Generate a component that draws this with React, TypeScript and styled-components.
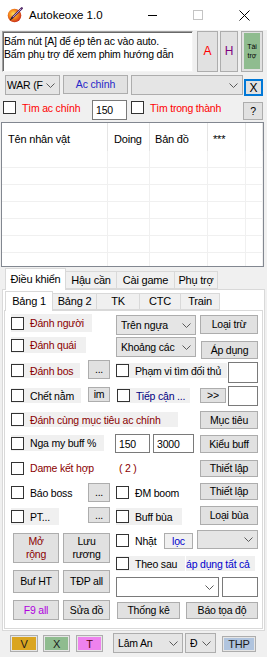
import React from "react";
import styled, { createGlobalStyle, css } from "styled-components";

const GlobalStyle = createGlobalStyle`
  html, body { margin: 0; padding: 0; background: #f0f0f0; }
  body { font-family: "Liberation Sans", Arial, sans-serif; font-size: 10.5px; letter-spacing: -0.2px; color: #000; }
  * { box-sizing: border-box; }
`;

type BoxP = { $ml?: number; $mt?: number; $w: number; $h: number };

const boxCss = css<BoxP>`
  flex-shrink: 0;
  margin-left: ${(p) => p.$ml ?? 0}px;
  margin-top: ${(p) => p.$mt ?? 0}px;
  width: ${(p) => p.$w}px;
  height: ${(p) => p.$h}px;
`;

const Window = styled.div`
  width: 267px;
  height: 657px;
  background: #f0f0f0;
  display: flex;
  flex-direction: column;
  overflow: hidden;
`;

const TitleBar = styled.div`
  height: 30px;
  background: #fff;
  display: flex;
  align-items: center;
  flex-shrink: 0;
`;

const AppIcon = styled.svg`
  margin-left: 7px;
  width: 16px;
  height: 16px;
  flex-shrink: 0;
`;

const Title = styled.span`
  margin-left: 6px;
  font-size: 11.5px;
  letter-spacing: 0;
  flex: 1;
  white-space: nowrap;
`;

const WinCtl = styled.div`
  width: 46px;
  height: 30px;
  display: flex;
  align-items: center;
  justify-content: center;
  flex-shrink: 0;
`;

const MinLine = styled.div`
  width: 9px;
  height: 1px;
  background: #000;
`;

const MaxBox = styled.div`
  width: 10px;
  height: 10px;
  border: 1px solid #c4c4c4;
`;

const Row = styled.div<{ $h: number; $mt?: number }>`
  display: flex;
  align-items: flex-start;
  height: ${(p) => p.$h}px;
  margin-top: ${(p) => p.$mt ?? 0}px;
  flex-shrink: 0;
`;

const Memo = styled.div<BoxP>`
  ${boxCss};
  background: #fff;
  border: 1px solid;
  border-color: #a0a0a0 #f4f4f4 #f4f4f4 #a0a0a0;
  box-shadow: inset 1px 1px 0 #696969;
  padding: 3px 0 0 1px;
  line-height: 13px;
  white-space: pre;
  overflow: hidden;
`;

const Btn = styled.div<BoxP & { $color?: string; $fs?: number; $light?: boolean }>`
  ${boxCss};
  background: ${(p) => (p.$light ? "#f0f0f0" : "#e1e1e1")};
  border: 1px solid #adadad;
  display: flex;
  align-items: center;
  justify-content: center;
  text-align: center;
  color: ${(p) => p.$color ?? "#000"};
  font-size: ${(p) => p.$fs ?? 10.5}px;
  line-height: 13px;
  white-space: pre;
  overflow: hidden;
`;

const ColorBtn = styled.div<BoxP & { $bg: string; $color?: string }>`
  ${boxCss};
  border: 1px solid #adadad;
  background: ${(p) => p.$bg};
  box-shadow: inset 0 0 0 1px #e6e6e6;
  display: flex;
  align-items: center;
  justify-content: center;
  color: ${(p) => p.$color ?? "#1a1a1a"};
  font-size: 11px;
`;

const FocusBtn = styled.div<BoxP>`
  ${boxCss};
  background: #e1e1e1;
  border: 2px solid #0078d7;
  display: flex;
  align-items: center;
  justify-content: center;
  font-size: 12px;
`;

const TaiTro = styled.div<BoxP>`
  ${boxCss};
  border: 1px solid #adadad;
  background: #e1e1e1;
  padding: 1px 2px 2px 2px;
  display: flex;
`;

const TaiTroFill = styled.div`
  flex: 1;
  background: #8fbc8f;
  display: flex;
  align-items: center;
  justify-content: center;
  text-align: center;
  font-size: 7px;
  letter-spacing: 0;
  line-height: 9px;
  white-space: pre;
`;

const ComboBox = styled.div<BoxP & { $white?: boolean; $pl?: number }>`
  ${boxCss};
  background: ${(p) => (p.$white ? "#fff" : "#e5e5e5")};
  border: 1px solid ${(p) => (p.$white ? "#7a7a7a" : "#adadad")};
  display: flex;
  align-items: center;
  padding-left: ${(p) => p.$pl ?? 4}px;
  overflow: hidden;
`;

const ComboText = styled.span`
  flex: 1;
  white-space: nowrap;
  overflow: hidden;
`;

const ChevronSvg = styled.svg`
  width: 9px;
  height: 5px;
  margin: 0 4px 0 1px;
  flex-shrink: 0;
`;

const Combo: React.FC<BoxP & { text?: string; white?: boolean; pl?: number }> = ({ text, white, pl, ...rest }) => (
  <ComboBox {...rest} $white={white} $pl={pl}>
    <ComboText>{text}</ComboText>
    <ChevronSvg viewBox="0 0 9 5">
      <path d="M0.5 0.5 L4.5 4.5 L8.5 0.5" fill="none" stroke="#5a5a5a" strokeWidth="1" />
    </ChevronSvg>
  </ComboBox>
);

const TextBox = styled.div<BoxP>`
  ${boxCss};
  background: #fff;
  border: 1px solid #7a7a7a;
  display: flex;
  align-items: center;
  padding-left: 3px;
  white-space: nowrap;
`;

const CheckWrap = styled.div<BoxP & { $bg?: boolean; $color?: string }>`
  ${boxCss};
  display: flex;
  align-items: center;
  background: ${(p) => (p.$bg ? "#f0f0f0" : "transparent")};
  color: ${(p) => p.$color ?? "#000"};
  white-space: nowrap;
  overflow: hidden;
`;

const CheckBox = styled.span`
  width: 13px;
  height: 13px;
  border: 1px solid #333;
  background: #fff;
  flex-shrink: 0;
`;

const CheckLabel = styled.span`
  margin-left: 6px;
`;

const Check: React.FC<BoxP & { label: string; bg?: boolean; color?: string }> = ({ label, bg, color, ...rest }) => (
  <CheckWrap {...rest} $bg={bg} $color={color}>
    <CheckBox />
    <CheckLabel>{label}</CheckLabel>
  </CheckWrap>
);

const Label = styled.div<BoxP & { $bg?: boolean; $color?: string }>`
  ${boxCss};
  display: flex;
  align-items: center;
  background: ${(p) => (p.$bg ? "#f0f0f0" : "transparent")};
  color: ${(p) => p.$color ?? "#000"};
  white-space: nowrap;
  overflow: hidden;
`;

/* List view */
const ListView = styled.div`
  margin: 2px 0 0 1px;
  width: 263px;
  height: 145px;
  border: 1px solid #828790;
  background: #fff;
  overflow: hidden;
  flex-shrink: 0;
`;

const LVHeader = styled.div`
  display: flex;
  height: 28px;
`;

const LVHeadCell = styled.div<{ $w?: number; $pl: number }>`
  ${(p) => (p.$w ? `width: ${p.$w}px; flex-shrink: 0;` : "flex: 1;")}
  padding: 3px 0 0 ${(p) => p.$pl}px;
  display: flex;
  align-items: center;
  border-right: 1px solid #e5e5e5;
  white-space: nowrap;
  font-size: 11px;
`;

const LVRow = styled.div`
  display: flex;
  height: 17px;
  border-bottom: 1px solid #f0f0f0;
`;

const LVCell = styled.div<{ $w?: number }>`
  ${(p) => (p.$w ? `width: ${p.$w}px; flex-shrink: 0;` : "flex: 1;")}
  border-right: 1px solid #f0f0f0;
`;

/* Tabs */
const TabControl = styled.div<{ $ml: number; $w: number; $mt: number }>`
  margin-left: ${(p) => p.$ml}px;
  margin-top: ${(p) => p.$mt}px;
  width: ${(p) => p.$w}px;
  display: flex;
  flex-direction: column;
  flex-shrink: 0;
`;

const TabStrip = styled.div<{ $h: number; $pl: number }>`
  display: flex;
  align-items: flex-end;
  height: ${(p) => p.$h}px;
  padding-left: ${(p) => p.$pl}px;
  position: relative;
  z-index: 1;
`;

const Tab = styled.div<{ $w: number; $h: number; $active?: boolean; $first?: boolean }>`
  width: ${(p) => p.$w}px;
  height: ${(p) => p.$h}px;
  margin-left: ${(p) => (p.$first ? 0 : -1)}px;
  margin-bottom: ${(p) => (p.$active ? -1 : 0)}px;
  border: 1px solid #d9d9d9;
  border-bottom: ${(p) => (p.$active ? "none" : "1px solid #d9d9d9")};
  background: ${(p) => (p.$active ? "#fff" : "#f0f0f0")};
  display: flex;
  align-items: center;
  justify-content: center;
  padding-bottom: ${(p) => (p.$active ? 2 : 1)}px;
  white-space: nowrap;
  flex-shrink: 0;
  font-size: 11px;
`;

const TabPage = styled.div<{ $h: number }>`
  height: ${(p) => p.$h}px;
  border: 1px solid #d9d9d9;
  background: #fff;
  padding: 1px;
  display: flex;
  flex-direction: column;
`;

const InnerPage = styled.div`
  height: 319px;
  border: 1px solid #d9d9d9;
  background: #fff;
  display: flex;
  flex-direction: column;
  flex-shrink: 0;
`;

const Block = styled.div<{ $h: number; $mt: number }>`
  display: flex;
  height: ${(p) => p.$h}px;
  margin-top: ${(p) => p.$mt}px;
  flex-shrink: 0;
`;

const Col = styled.div<{ $ml: number; $w: number }>`
  margin-left: ${(p) => p.$ml}px;
  width: ${(p) => p.$w}px;
  display: flex;
  flex-direction: column;
  flex-shrink: 0;
`;

const MAROON = "#8b0000";
const NAVY = "#000080";
const BLUE = "#0000cd";

export default function App() {
  const lvCols = [106, 42, 58, 38];
  return (
    <>
      <GlobalStyle />
      <Window>
        <TitleBar>
          <AppIcon viewBox="0 0 16 16">
            <defs>
              <radialGradient id="ig" cx="0.42" cy="0.4" r="0.65">
                <stop offset="0" stopColor="#ffe766" />
                <stop offset="0.45" stopColor="#f7901e" />
                <stop offset="1" stopColor="#c4231a" />
              </radialGradient>
            </defs>
            <circle cx="7.5" cy="8.5" r="6.8" fill="url(#ig)" />
            <path d="M14.8 1.2 L5.2 10.8" stroke="#4a2060" strokeWidth="2.2" strokeLinecap="round" />
            <path d="M14.2 1.8 L5.8 10.2" stroke="#d8c0ea" strokeWidth="0.8" />
            <path d="M5.2 10.8 L3.6 12.6" stroke="#222" strokeWidth="1.2" strokeLinecap="round" />
          </AppIcon>
          <Title>Autokeoxe 1.0</Title>
          <WinCtl>
            <MinLine />
          </WinCtl>
          <WinCtl>
            <MaxBox />
          </WinCtl>
          <WinCtl>
            <svg width="11" height="11" viewBox="0 0 11 11">
              <path d="M0.5 0.5 L10.5 10.5 M10.5 0.5 L0.5 10.5" stroke="#000" strokeWidth="1" />
            </svg>
          </WinCtl>
        </TitleBar>

        <Row $h={41} $mt={1}>
          <Memo $ml={2} $w={191} $h={41}>
            {"Bấm nút [A] để ép tên ac vào auto.\nBấm phụ trợ để xem phim hướng dẫn"}
          </Memo>
          <Btn $ml={4} $w={21} $h={41} $color="#f00" $fs={12}>A</Btn>
          <Btn $ml={2} $w={18} $h={41} $color="#800080" $fs={12}>H</Btn>
          <TaiTro $ml={3} $w={22} $h={41}>
            <TaiTroFill>{"Tài\ntrợ"}</TaiTroFill>
          </TaiTro>
        </Row>

        <Row $h={21} $mt={3}>
          <Combo $ml={5} $w={55} $h={20} pl={1} text="WAR (F" />
          <Btn $ml={3} $w={65} $h={19} $color="#2626c8">Ac chính</Btn>
          <Combo $ml={3} $w={112} $h={20} />
          <FocusBtn $ml={1} $w={19} $mt={4} $h={17}>X</FocusBtn>
        </Row>

        <Row $h={20} $mt={4}>
          <Check $ml={3} $w={89} $h={15} label="Tìm ac chính" color="#f00" />
          <TextBox $w={35} $h={20}>150</TextBox>
          <Check $ml={4} $w={100} $h={15} label="Tìm trong thành" color="#f00" />
          <Btn $ml={12} $w={20} $mt={2} $h={18}>?</Btn>
        </Row>

        <ListView>
          <LVHeader>
            <LVHeadCell $w={106} $pl={6}>Tên nhân vật</LVHeadCell>
            <LVHeadCell $w={42} $pl={6}>Doing</LVHeadCell>
            <LVHeadCell $w={58} $pl={5}>Bản đồ</LVHeadCell>
            <LVHeadCell $w={38} $pl={5}>***</LVHeadCell>
            <LVHeadCell $pl={0} />
          </LVHeader>
          {Array.from({ length: 7 }).map((_, i) => (
            <LVRow key={i}>
              {lvCols.map((w, j) => (
                <LVCell key={j} $w={w} />
              ))}
              <LVCell />
            </LVRow>
          ))}
        </ListView>

        <TabControl $ml={2} $w={263} $mt={1}>
          <TabStrip $h={21} $pl={3}>
            <Tab $first $active $w={61} $h={22}>Điều khiển</Tab>
            <Tab $w={52} $h={18}>Hậu cần</Tab>
            <Tab $w={59} $h={18}>Cài game</Tab>
            <Tab $w={44} $h={18}>Phụ trợ</Tab>
          </TabStrip>
          <TabPage $h={342}>
            <TabStrip $h={19} $pl={1}>
              <Tab $first $active $w={48} $h={20}>Bảng 1</Tab>
              <Tab $w={45} $h={17}>Bảng 2</Tab>
              <Tab $w={44} $h={17}>TK</Tab>
              <Tab $w={42} $h={17}>CTC</Tab>
              <Tab $w={40} $h={17}>Train</Tab>
            </TabStrip>
            <InnerPage>
              <Row $h={22} $mt={2}>
                <Check $ml={6} $w={81} $mt={1} $h={18} bg color={MAROON} label="Đánh người" />
                <Combo $ml={24} $w={80} $mt={2} $h={20} text="Trên ngựa" />
                <Btn $ml={4} $w={58} $mt={2} $h={19}>Loại trừ</Btn>
              </Row>
              <Row $h={22} $mt={2}>
                <Check $ml={6} $w={75} $h={16} bg color={MAROON} label="Đánh quái" />
                <Combo $ml={30} $w={80} $h={20} text="Khoảng các" />
                <Btn $ml={5} $w={57} $mt={4} $h={18}>Áp dụng</Btn>
              </Row>
              <Row $h={23} $mt={1}>
                <Check $ml={6} $w={69} $mt={3} $h={15} bg color={MAROON} label="Đánh bos" />
                <Btn $ml={8} $w={22} $h={19}>...</Btn>
                <Check $ml={6} $w={111} $mt={3} $h={15} bg label="Phạm vi tìm đối thủ" />
                <TextBox $ml={1} $w={30} $mt={2} $h={21} />
              </Row>
              <Row $h={20} $mt={3}>
                <Check $ml={6} $w={70} $mt={2} $h={15} bg label="Chết nằm" />
                <Btn $ml={7} $w={22} $mt={1} $h={15}>im</Btn>
                <Check $ml={7} $w={73} $mt={2} $h={15} bg color={NAVY} label="Tiếp cận ..." />
                <Btn $ml={10} $w={26} $mt={2} $h={15}>{">>"}</Btn>
                <TextBox $ml={2} $w={30} $h={20} />
              </Row>
              <Row $h={19} $mt={5}>
                <Check $ml={6} $w={167} $mt={1} $h={15} bg color={MAROON} label="Đánh cùng mục tiêu ac chính" />
                <Btn $ml={22} $w={58} $h={18}>Mục tiêu</Btn>
              </Row>
              <Row $h={21} $mt={4}>
                <Check $ml={6} $w={93} $mt={1} $h={16} bg label="Nga my buff %" />
                <TextBox $ml={11} $w={35} $h={19}>150</TextBox>
                <TextBox $ml={3} $w={41} $h={19}>3000</TextBox>
                <Btn $ml={6} $w={58} $mt={1} $h={18}>Kiểu buff</Btn>
              </Row>
              <Row $h={17} $mt={5}>
                <Check $ml={6} $w={100} $h={16} color={MAROON} label="Dame kết hợp" />
                <Label $ml={8} $w={20} $h={16} $color={MAROON}>( 2 )</Label>
                <Btn $ml={61} $w={58} $h={17}>Thiết lập</Btn>
              </Row>
              <Row $h={19} $mt={6}>
                <Check $ml={6} $w={77} $mt={2} $h={15} label="Báo boss" />
                <Btn $w={22} $h={19}>...</Btn>
                <Check $ml={6} $w={66} $mt={2} $h={15} label="ĐM boom" />
                <Btn $ml={18} $w={58} $h={17}>Thiết lập</Btn>
              </Row>
              <Row $h={19} $mt={4}>
                <Check $ml={6} $w={48} $mt={2} $h={17} bg label="PT..." />
                <Btn $ml={29} $w={22} $mt={1} $h={16}>...</Btn>
                <Check $ml={6} $w={66} $mt={2} $h={17} bg label="Buff bùa" />
                <Btn $ml={18} $w={58} $h={19}>Loại bùa</Btn>
              </Row>

              <Block $h={67} $mt={5}>
                <Col $ml={8} $w={97}>
                  <Row $h={30} $mt={3}>
                    <Btn $w={46} $h={30} $color={MAROON}>{"Mở\nrộng"}</Btn>
                    <Btn $ml={4} $w={47} $h={30}>{"Lưu\nrương"}</Btn>
                  </Row>
                  <Row $h={23} $mt={7}>
                    <Btn $w={46} $h={23}>Buf HT</Btn>
                    <Btn $ml={4} $w={47} $h={23}>TĐP all</Btn>
                  </Row>
                </Col>
                <Col $ml={6} $w={142}>
                  <Row $h={19}>
                    <Check $w={48} $mt={3} $h={15} label="Nhặt" />
                    <Btn $w={29} $mt={3} $h={16} $light $color={BLUE}>lọc</Btn>
                    <Combo $ml={4} $w={61} $h={19} />
                  </Row>
                  <Row $h={15} $mt={7}>
                    <Check $w={69} $h={15} bg label="Theo sau" />
                    <Label $ml={1} $w={69} $h={15} $bg $color={BLUE}>áp dụng tất cả</Label>
                  </Row>
                  <Row $h={20} $mt={6}>
                    <Combo $w={103} $h={20} white />
                    <TextBox $ml={3} $w={36} $h={20} />
                  </Row>
                </Col>
              </Block>

              <Row $h={20} $mt={3}>
                <Btn $ml={8} $w={46} $h={20} $color="#b000e0">F9 all</Btn>
                <Btn $ml={4} $w={47} $h={20}>Sửa đồ</Btn>
                <Btn $ml={7} $w={63} $mt={2} $h={17}>Thống kê</Btn>
                <Btn $ml={6} $w={72} $mt={2} $h={17}>Báo tọa độ</Btn>
              </Row>
            </InnerPage>
          </TabPage>
        </TabControl>

        <Row $h={21} $mt={2}>
          <ColorBtn $ml={10} $w={28} $mt={2} $h={17} $bg="#daa520">V</ColorBtn>
          <ColorBtn $ml={5} $w={27} $mt={2} $h={17} $bg="#8fbc8f">X</ColorBtn>
          <ColorBtn $ml={6} $w={27} $mt={2} $h={17} $bg="#ee82ee" $color="#5a0010">T</ColorBtn>
          <Combo $ml={10} $w={70} $h={20} text="Lâm An" />
          <Combo $ml={2} $w={31} $h={20} text="Đ" />
          <ColorBtn $ml={6} $w={34} $mt={3} $h={16} $bg="#b0c4de">THP</ColorBtn>
        </Row>
      </Window>
    </>
  );
}
